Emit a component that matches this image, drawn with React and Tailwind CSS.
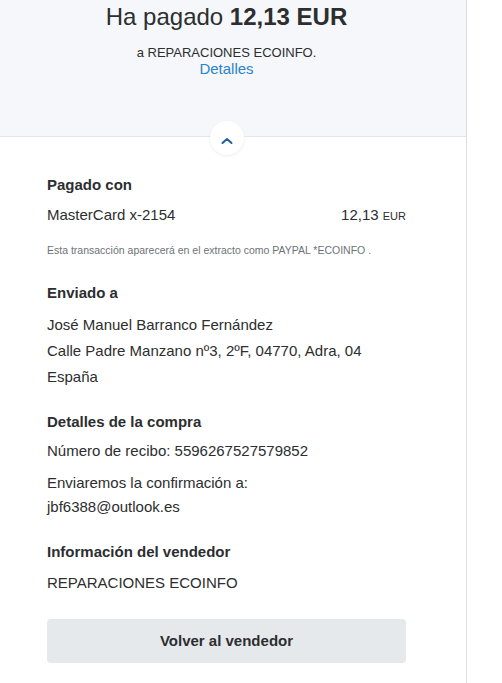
export default function App() {
  return (
    <div className="flex h-[683px] w-[502px] overflow-hidden bg-white font-['Liberation_Sans',Arial,sans-serif] text-[#2c2e2f]">
      <div className="w-[467px] border-r border-[#dedede]">
        <header className="h-[137px] border-b border-[#e3e6ea] bg-[#f5f7fa] pr-[13px] pt-px text-center">
          <h1 className="text-[24px] leading-[32px]">
            Ha pagado <span className="font-bold">12,13 EUR</span>
          </h1>
          <p className="mt-[12px] text-[13px] leading-[16px]">a REPARACIONES ECOINFO.</p>
          <a className="block text-[15px] leading-[16px] text-[#2a84c8]">Detalles</a>
        </header>

        <div className="flex justify-center pr-[13px]">
          <div className="-mt-[16px] flex h-[34px] w-[34px] items-center justify-center rounded-full bg-white shadow-[0_1px_3px_rgba(0,0,0,0.08)]">
            <svg width="12" height="8" viewBox="0 0 12 8" fill="none" className="mt-[6px]">
              <path d="M1.5 6 L6 2 L10.5 6" stroke="#1f5f9c" strokeWidth="2" strokeLinecap="round" strokeLinejoin="round" />
            </svg>
          </div>
        </div>

        <main className="pl-[47px] pr-[60px] pt-[20px]">
          <h2 className="text-[15px] font-bold leading-[20px]">Pagado con</h2>
          <div className="mt-[10px] flex justify-between text-[15px] leading-[20px]">
            <span>MasterCard x-2154</span>
            <span>
              12,13 <span className="text-[11px]">EUR</span>
            </span>
          </div>
          <p className="mt-[17px] text-[10.5px] leading-[14px] text-[#6c7378]">
            Esta transacción aparecerá en el extracto como PAYPAL *ECOINFO .
          </p>

          <h2 className="mt-[26px] text-[15px] font-bold leading-[20px]">Enviado a</h2>
          <div className="mt-[9px] text-[15px] leading-[26px]">
            <p>José Manuel Barranco Fernández</p>
            <p>Calle Padre Manzano nº3, 2ºF, 04770, Adra, 04</p>
            <p>España</p>
          </div>

          <h2 className="mt-[22px] text-[15px] font-bold leading-[20px]">Detalles de la compra</h2>
          <p className="mt-[6px] text-[15px] leading-[26px]">Número de recibo: 5596267527579852</p>
          <div className="mt-[7px] text-[15px] leading-[24px]">
            <p>Enviaremos la confirmación a:</p>
            <p>jbf6388@outlook.es</p>
          </div>

          <h2 className="mt-[23px] text-[15px] font-bold leading-[20px]">Información del vendedor</h2>
          <p className="mt-[8px] text-[15px] leading-[26px]">REPARACIONES ECOINFO</p>

          <button className="mt-[23px] block h-[44px] w-full rounded-[4px] bg-[#e6e9ec] text-[15px] font-bold leading-[44px] text-[#2c2e2f]">
            Volver al vendedor
          </button>
        </main>
      </div>
    </div>
  );
}
